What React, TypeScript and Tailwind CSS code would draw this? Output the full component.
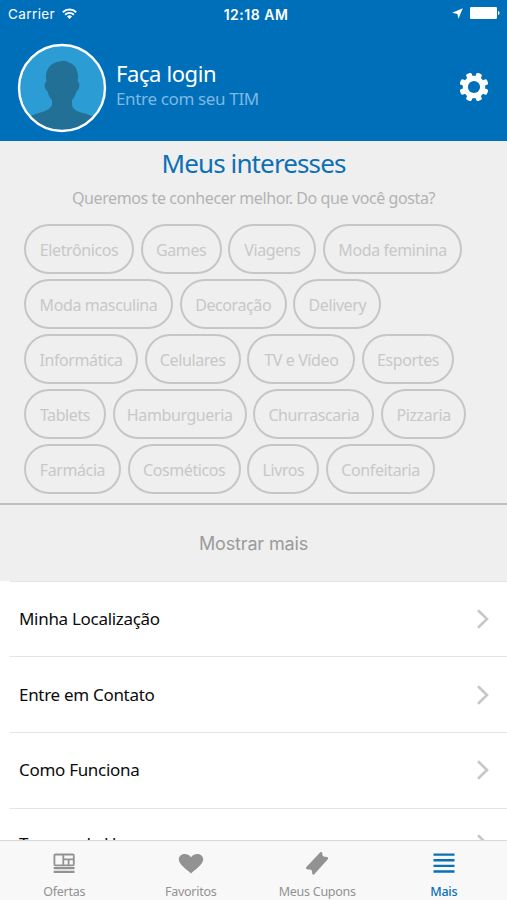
import { ReactNode } from 'react';

const interests = [
  [
    { label: 'Eletrônicos', size: 'w-[110px]' },
    { label: 'Games', size: 'w-[81px]' },
    { label: 'Viagens', size: 'w-[88px]' },
    { label: 'Moda feminina', size: 'w-[139px]' },
  ],
  [
    { label: 'Moda masculina', size: 'w-[149px]' },
    { label: 'Decoração', size: 'w-[107px]' },
    { label: 'Delivery', size: 'w-[88px]' },
  ],
  [
    { label: 'Informática', size: 'w-[114px]' },
    { label: 'Celulares', size: 'w-[96px]' },
    { label: 'TV e Vídeo', size: 'w-[108px]' },
    { label: 'Esportes', size: 'w-[92px]' },
  ],
  [
    { label: 'Tablets', size: 'w-[82px]' },
    { label: 'Hamburgueria', size: 'w-[134px]' },
    { label: 'Churrascaria', size: 'w-[121px]' },
    { label: 'Pizzaria', size: 'w-[85px]' },
  ],
  [
    { label: 'Farmácia', size: 'w-[97px]' },
    { label: 'Cosméticos', size: 'w-[113px]' },
    { label: 'Livros', size: 'w-[72px]' },
    { label: 'Confeitaria', size: 'w-[109px]' },
  ],
];

const menu = ['Minha Localização', 'Entre em Contato', 'Como Funciona', 'Termos de Uso'];

const StatusBar = () => (
  <div className="grid h-7 grid-cols-3 items-center pl-2 pr-[7px] font-['Inter','Liberation_Sans',sans-serif] text-white">
    <div className="flex items-center gap-[7px]">
      <span className="text-[13.5px] tracking-[0.4px]">Carrier</span>
      <svg width="15" height="11" viewBox="0 0 15 11" className="-mt-0.5" fill="none" stroke="currentColor" strokeWidth="1.9">
        <path d="M.8 4.2a9.6 9.6 0 0 1 13.4 0" />
        <path d="M3.1 6.7a6.3 6.3 0 0 1 8.8 0" />
        <path d="M7.5 11 5 8.5a3.6 3.6 0 0 1 5 0z" fill="currentColor" stroke="none" />
      </svg>
    </div>
    <span className="ml-1 whitespace-nowrap text-center text-[14px] font-semibold tracking-[0.5px]">12:18 AM</span>
    <div className="flex items-center justify-end gap-[7px]">
      <svg width="11" height="11" viewBox="0 0 11 11" className="-mt-0.5" fill="currentColor">
        <path d="M10.8.3 6.4 10.800 5.400 6 .2 4.800z" />
      </svg>
      <svg width="30" height="12" viewBox="0 0 30 12" className="-mt-0.5" fill="currentColor">
        <rect width="27" height="12" rx="1.2" />
        <path d="M28 4c2 .2 2 3.800 0 4z" />
      </svg>
    </div>
  </div>
);

const Avatar = () => (
  <svg width="90" height="90" viewBox="0 0 90 90">
    <defs>
      <clipPath id="face">
        <circle cx="45" cy="45" r="43" />
      </clipPath>
    </defs>
    <circle cx="45" cy="45" r="43" fill="#2c9cd5" />
    <path
      clipPath="url(#face)"
      fill="#227096"
      d="M45 18c3-.6 5 .5 6.500 1.300C58 21.500 61 27 61 34c0 2-.2 3.500-.5 5 2 0 2.300 3 1.400 6-.6 2-1.500 3.200-2.500 3.200-.7 4-2.600 6.800-4.400 8.800v5.500c1.500 4.500 5.500 6 11 7.500 6 1.700 10 3 13 6.500V90H10V76c3-3.500 7-4.600 13-6.300 5.500-1.500 9.500-3.200 12-7.700V57c-1.800-2-3.700-4.800-4.400-8.800-1 0-1.900-1.200-2.500-3.200-.9-3-.6-6 1.400-6-.3-1.500-.5-3-.5-5 0-8 5-14.500 13-15.500z"
    />
    <circle cx="45" cy="45" r="43" fill="none" stroke="#fff" strokeWidth="2.400" />
  </svg>
);

const Gear = () => (
  <svg width="28" height="28" viewBox="-14 -14 28 28" className="-mt-0.5">
    <g fill="#fff">
      {[22.5, 67.5, 112.5, 157.5].map((angle) => (
        <rect key={angle} x="-2.900" y="-14.600" width="5.800" height="29.200" rx="1.700" transform={`rotate(${angle})`} />
      ))}
      <circle r="11.200" />
    </g>
    <circle r="6.100" fill="#006fba" />
  </svg>
);

const Header = () => (
  <header className="h-[141px] bg-[#006fba]">
    <StatusBar />
    <div className="flex items-center pl-[17px] pr-[19px] pt-[15px]">
      <Avatar />
      <div className="-mt-[5px] ml-[9px] flex-1">
        <p className="text-[22px] leading-[26px] tracking-[-0.4px] text-white">Faça login</p>
        <p className="mt-px text-[17px] leading-6 tracking-[-0.35px] text-[#7db9e2]">Entre com seu TIM</p>
      </div>
      <Gear />
    </div>
  </header>
);

const Interests = () => (
  <section className="h-[364px] border-b-2 border-[#c0c0c0] bg-[#efefef]">
    <h1 className="pt-[5px] text-center text-[26px] leading-[34px] tracking-[-0.88px] text-[#0e70b4]">Meus interesses</h1>
    <p className="mt-1.5 text-center text-[16px] leading-6 tracking-[-0.4px] text-[#b3b3b3]">
      Queremos te conhecer melhor. Do que você gosta?
    </p>
    <div className="mt-[14px] flex flex-col gap-[5px] pl-6">
      {interests.map((row) => (
        <div key={row[0].label} className="flex gap-[6.700px]">
          {row.map(({ label, size }) => (
            <button
              key={label}
              className={`${size} h-[50px] whitespace-nowrap rounded-full border-2 border-[#c6c6c6] pt-px text-[16px] tracking-[-0.4px] text-[#c8c8c8]`}
            >
              {label}
            </button>
          ))}
        </div>
      ))}
    </div>
  </section>
);

const MenuRow = ({ label }: { label: string }) => (
  <li className="ml-[10px] flex h-[75.700px] shrink-0 items-center justify-between border-t border-[#e4e4e4] pl-[9px] pr-[17px] last:h-[72px]">
    <span className="text-[17px] tracking-[-0.3px] text-[#0c0c0c]">{label}</span>
    <svg width="14" height="20" viewBox="0 0 14 20" fill="none" stroke="#c7c7c7" strokeWidth="2.600">
      <path d="m2 1.200 9 8.800-9 8.800" />
    </svg>
  </li>
);

const Tab = ({ label, active, children }: { label: string; active?: boolean; children: ReactNode }) => (
  <button className={`flex flex-1 flex-col items-center pt-[9px] ${active ? 'text-[#0a70b8]' : 'text-[#929292]'}`}>
    <svg width="28" height="28" viewBox="0 0 28 28" fill="currentColor">
      {children}
    </svg>
    <span className={`mt-[6px] text-[12.5px] leading-4 tracking-[-0.25px] ${active ? 'font-medium' : ''}`}>{label}</span>
  </button>
);

const TabBar = () => (
  <nav className="flex h-[60px] shrink-0 border-t border-[#cfcfcf]/80 bg-[#f8f8f8] bg-clip-padding pl-px">
    <Tab label="Ofertas">
      <g fill="none" stroke="currentColor" strokeWidth="1.800">
        <rect x="4.400" y="4.500" width="19.400" height="10.800" rx="1" />
        <path d="M13.300 4.700v10.500M13.300 9.400h10.300M18.600 9.400v5.500" />
        <path d="M3.700 18.200h20.800M3.700 21.900h20.800" strokeWidth="2.200" />
      </g>
    </Tab>
    <Tab label="Favoritos">
      <path d="M14 23.500C10.500 20.300 1.800 14.500 1.800 9.600 1.800 6.300 4.300 4 7.500 4c2.700 0 4.800 1 6.500 3.300C15.700 5 17.800 4 20.500 4c3.200 0 5.700 2.300 5.700 5.600 0 4.900-8.700 10.700-12.200 13.900z" />
    </Tab>
    <Tab label="Meus Cupons">
      <path d="M17.300 2.300c.8-.7 1.500-.3 1.900.5.300 1.100-.2 2.400.8 3.300 1 .9 2.400.6 3.600 1 1.500.3 2 1.200 1.200 2.100L11.300 24.200c-.7.800-1.700.5-2-.5-.4-1.200.2-2.600-.8-3.500-.9-.9-2.400-.4-3.700-.8-1.700-.4-2.300-1.500-1.400-2.500z" />
    </Tab>
    <Tab label="Mais" active>
      <path d="M3.500 3.600h21v2.200h-21zM3.500 9.100h21v2.400h-21zM3.500 14.800h21v2.300h-21zM3.500 20.300h21v2.400h-21z" />
    </Tab>
  </nav>
);

export default function App() {
  return (
    <div className="flex h-[900px] w-[507px] flex-col overflow-hidden bg-white font-['Noto_Sans','Open_Sans',sans-serif]">
      <Header />
      <main className="flex min-h-0 flex-1 flex-col overflow-hidden">
        <div className="shrink-0">
          <Interests />
          <button className="block h-[75.500px] w-full bg-[#efefef] pt-0.5 font-['Inter','Liberation_Sans',sans-serif] text-[18px] tracking-[-0.15px] text-[#9b9b9b]">
            Mostrar mais
          </button>
        </div>
        <ul className="flex shrink-0 flex-col">
          {menu.map((label) => (
            <MenuRow key={label} label={label} />
          ))}
        </ul>
      </main>
      <TabBar />
    </div>
  );
}
